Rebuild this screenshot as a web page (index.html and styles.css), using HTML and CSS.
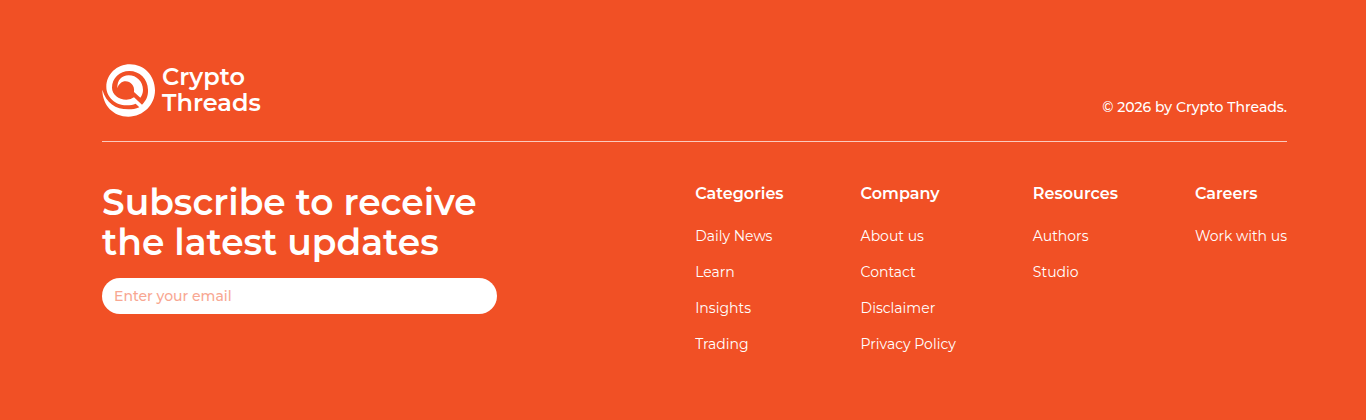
FILE: index.html
```html
<!DOCTYPE html>
<html lang="en">
<head>
  <meta charset="utf-8">
  <meta name="viewport" content="width=device-width, initial-scale=1">
  <title>Crypto Threads</title>
  <link rel="stylesheet" href="styles.css">
</head>
<body>

  <footer class="footer">
    <div class="footer-top">
      <a class="logo" href="#">
        <svg class="logo-icon" viewBox="21 26 159 159" aria-hidden="true">
          <path fill="#fff" d="M22 103 C22 150 56 184 100 184 C145 184 180 149 180 105 C180 61 147 27 105 27 C65 27 34 57 34 95 C34 126 62 150 94 150 C107 150 114 149 122 145 L133 156 C122 161 112 162 100 162 C61 162 34 143 22 103 Z"/>
          <path fill="#f15025" d="M103 47 C74 47 51 69 51 97 C51 117 71 133 94 133 C100 133 106 132 111 129 L117 126 L141 148 C153 136 160 122 159 103 C158 71 134 47 103 47 Z"/>
          <path fill="#fff" d="M67 99 C66 75 80 60 101 60 C125 60 144 79 144 103 C144 112 141 120 136 127 L117 110 C120 91 106 78 92 78 C80 78 71 86 67 99 Z"/>
        </svg>
        <span class="logo-text">Crypto<br>Threads</span>
      </a>
      <p class="copyright">© 2026 by Crypto Threads.</p>
    </div>

    <div class="footer-main">
      <form class="subscribe">
        <h2><label for="email">Subscribe to receive<br>the latest updates</label></h2>
        <input id="email" type="email" placeholder="Enter your email">
      </form>

      <nav class="links">
        <div class="links-col">
          <h3>Categories</h3>
          <ul>
            <li><a href="#">Daily News</a></li>
            <li><a href="#">Learn</a></li>
            <li><a href="#">Insights</a></li>
            <li><a href="#">Trading</a></li>
          </ul>
        </div>
        <div class="links-col">
          <h3>Company</h3>
          <ul>
            <li><a href="#">About us</a></li>
            <li><a href="#">Contact</a></li>
            <li><a href="#">Disclaimer</a></li>
            <li><a href="#">Privacy Policy</a></li>
          </ul>
        </div>
        <div class="links-col">
          <h3>Resources</h3>
          <ul>
            <li><a href="#">Authors</a></li>
            <li><a href="#">Studio</a></li>
          </ul>
        </div>
        <div class="links-col">
          <h3>Careers</h3>
          <ul>
            <li><a href="#">Work with us</a></li>
          </ul>
        </div>
      </nav>
    </div>
  </footer>

</body>
</html>
```
FILE: styles.css
```css
* {
  box-sizing: border-box;
}
body {
  margin: 0;
  background: #f15025;
  color: #fff;
  font-family: Montserrat, Inter, sans-serif;
  font-size: 14px;
}
h2, h3, p, ul {
  margin: 0;
  padding: 0;
}
ul {
  list-style: none;
}
a {
  color: inherit;
  text-decoration: none;
}
.footer {
  padding: 64px 79px 58px 102px;
}
.footer-top {
  display: flex;
  justify-content: space-between;
  align-items: flex-end;
  padding-bottom: 24px;
  border-bottom: 1px solid #fbcabd;
}
.logo {
  display: flex;
  align-items: flex-start;
  gap: 7px;
}
.logo-icon {
  width: 53px;
  height: 53px;
}
.logo-text {
  font-size: 24px;
  font-weight: 600;
  line-height: 26px;
}
.copyright {
  font-weight: 500;
  line-height: 20px;
}
.footer-main {
  display: flex;
  justify-content: space-between;
  padding-top: 40px;
}
.subscribe {
  width: 395px;
}
.subscribe h2 {
  font-size: 36px;
  font-weight: 600;
  line-height: 40px;
}
.subscribe input {
  display: block;
  width: 100%;
  height: 36px;
  margin-top: 16px;
  padding: 0 12px;
  border: 0;
  border-radius: 18px;
  background: #fff;
  color: #f15025;
  font: inherit;
  font-weight: 500;
}
.subscribe input::placeholder {
  color: #f8a792;
}
.links {
  display: flex;
  gap: 77px;
}
.links h3 {
  font-size: 16px;
  font-weight: 600;
  line-height: 24px;
  margin-bottom: 12px;
}
.links li {
  line-height: 36px;
}
```
